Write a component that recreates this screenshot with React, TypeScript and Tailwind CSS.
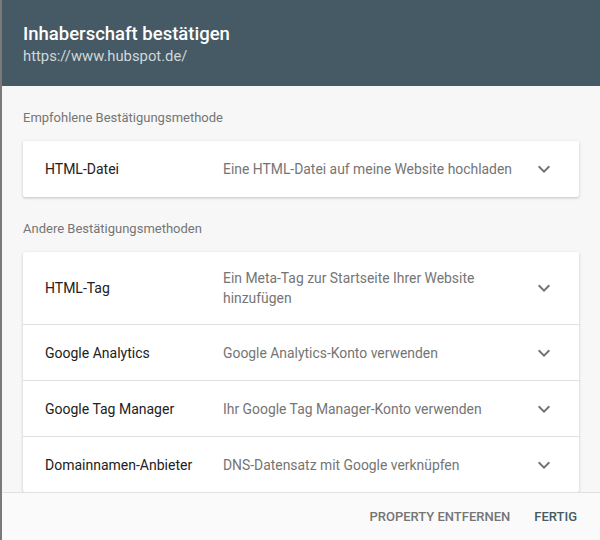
import React from "react";

const Chevron = () => (
  <svg width="24" height="24" viewBox="0 0 24 24" className="shrink-0 -my-[2px] -ml-[1px] mr-[1px]">
    <path d="M16.59 8.59L12 13.17 7.41 8.59 6 10l6 6 6-6z" fill="#757575" />
  </svg>
);

type Row = { title: string; desc: string };

const MethodRow = ({ row, first }: { row: Row; first: boolean }) => (
  <div
    className={`flex items-center min-h-[56px] py-4 pl-[22px] pr-[22px] ${first ? "" : "border-t border-[#e0e0e0]"}`}
  >
    <div className="w-[178px] shrink-0 text-[14px] leading-5 text-[#212121]">{row.title}</div>
    <div className="flex-1 mr-[10px] text-[13.9px] leading-5 text-[#757575]">{row.desc}</div>
    <Chevron />
  </div>
);

const others: Row[] = [
  { title: "HTML-Tag", desc: "Ein Meta-Tag zur Startseite Ihrer Website hinzufügen" },
  { title: "Google Analytics", desc: "Google Analytics-Konto verwenden" },
  { title: "Google Tag Manager", desc: "Ihr Google Tag Manager-Konto verwenden" },
  { title: "Domainnamen-Anbieter", desc: "DNS-Datensatz mit Google verknüpfen" },
];

export default function App() {
  return (
    <div
      className="w-[600px] h-[540px] flex flex-col overflow-hidden border-l-2 border-[#7a7a7a] bg-[#f7f7f7]"
      style={{ fontFamily: "Roboto, 'Noto Sans', sans-serif" }}
    >
      <div className="bg-[#455a64] pl-[21px] pt-[23px] pb-[20px] shrink-0">
        <div className="text-[18.5px] leading-[23px] font-medium text-white">Inhaberschaft bestätigen</div>
        <div className="text-[14.8px] leading-5 text-[#cfd8dc]">https://www.hubspot.de/</div>
      </div>
      <div className="flex-1 overflow-hidden px-[21px] pt-[22px]">
        <div className="text-[13px] leading-5 text-[#757575]">Empfohlene Bestätigungsmethode</div>
        <div className="mt-[13px] bg-white rounded-[2px] shadow-[0_1px_3px_rgba(0,0,0,0.22)]">
          <MethodRow row={{ title: "HTML-Datei", desc: "Eine HTML-Datei auf meine Website hochladen" }} first />
        </div>
        <div className="mt-[22px] text-[13px] leading-5 text-[#757575]">Andere Bestätigungsmethoden</div>
        <div className="mt-[13px] bg-white rounded-[2px] shadow-[0_1px_3px_rgba(0,0,0,0.22)]">
          {others.map((r, i) => (
            <MethodRow key={r.title} row={r} first={i === 0} />
          ))}
        </div>
      </div>
      <div className="h-[48px] shrink-0 border-t border-[#e0e0e0] bg-[#fafafa] flex items-center justify-end gap-6 pr-[23px]">
        <span className="text-[13px] font-medium text-[#757575]">PROPERTY ENTFERNEN</span>
        <span className="text-[13px] font-medium text-[#455a64]">FERTIG</span>
      </div>
    </div>
  );
}
